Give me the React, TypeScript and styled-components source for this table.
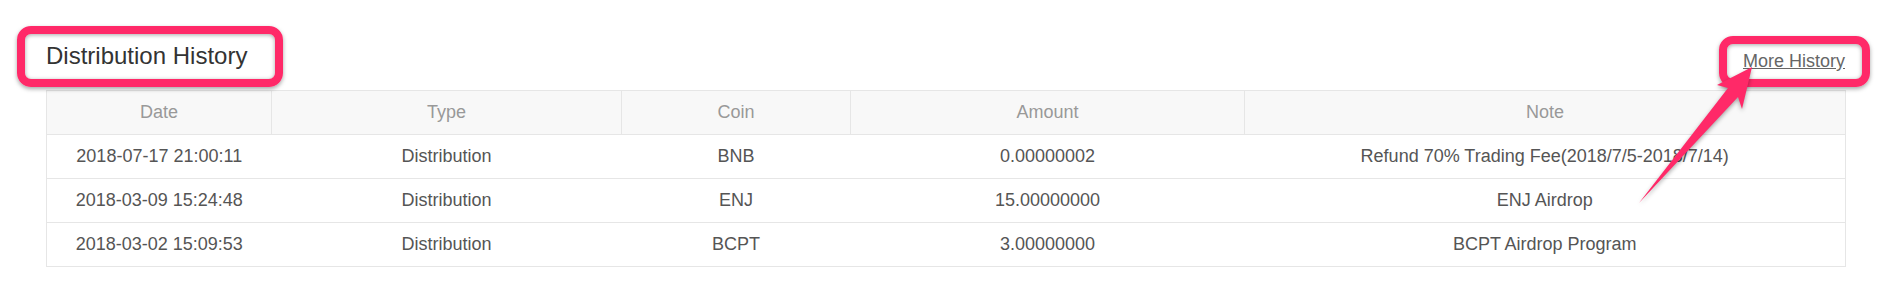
import React from 'react'
import styled, { createGlobalStyle } from 'styled-components'

const Global = createGlobalStyle`
  html, body {
    margin: 0;
    padding: 0;
    background: #fff;
    font-family: "Liberation Sans", Arial, sans-serif;
  }
`

const Page = styled.div`
  position: relative;
  width: 1890px;
  height: 306px;
  padding: 42px 45px 0 46px;
  box-sizing: border-box;
  overflow: hidden;
`

const Header = styled.div`
  display: flex;
  justify-content: space-between;
  align-items: flex-start;
  height: 48px;
`

const Title = styled.h2`
  margin: 0;
  font-size: 24px;
  line-height: 27px;
  font-weight: normal;
  color: #333;
`

const MoreLink = styled.a`
  margin-top: 9px;
  font-size: 18px;
  line-height: 20px;
  color: #666;
  text-decoration: underline;
  cursor: pointer;
`

const Table = styled.table`
  width: 1799px;
  border-collapse: collapse;
  table-layout: fixed;
  border: 1px solid #e6e6e6;
  font-size: 18px;
`

const HeadCell = styled.th`
  height: 43px;
  padding: 0;
  background: #f8f8f8;
  color: #999;
  font-weight: normal;
  text-align: center;
  border: 1px solid #e6e6e6;
`

const Cell = styled.td`
  height: 43px;
  padding: 0;
  color: #555;
  text-align: center;
  border-top: 1px solid #e6e6e6;
  border-bottom: 1px solid #e6e6e6;
`

/* annotation overlay: callout boxes + arrow drawn over the page */
const Callout = styled.div<{ $x: number; $y: number; $w: number; $h: number }>`
  position: absolute;
  left: ${p => p.$x}px;
  top: ${p => p.$y}px;
  width: ${p => p.$w}px;
  height: ${p => p.$h}px;
  box-sizing: border-box;
  border: 8px solid #ff2968;
  border-radius: 14px;
  box-shadow: 0 2px 4px rgba(0, 0, 0, 0.35), inset 0 1px 4px rgba(0, 0, 0, 0.35);
  pointer-events: none;
`

const ArrowSvg = styled.svg`
  position: absolute;
  left: 1630px;
  top: 60px;
  overflow: visible;
  filter: drop-shadow(0 2px 2px rgba(0, 0, 0, 0.35));
  pointer-events: none;
`

const columns = [
  { label: 'Date', width: 225 },
  { label: 'Type', width: 350 },
  { label: 'Coin', width: 229 },
  { label: 'Amount', width: 394 },
  { label: 'Note', width: 601 },
]

const rows = [
  ['2018-07-17 21:00:11', 'Distribution', 'BNB', '0.00000002', 'Refund 70% Trading Fee(2018/7/5-2018/7/14)'],
  ['2018-03-09 15:24:48', 'Distribution', 'ENJ', '15.00000000', 'ENJ Airdrop'],
  ['2018-03-02 15:09:53', 'Distribution', 'BCPT', '3.00000000', 'BCPT Airdrop Program'],
]

export default function App() {
  return (
    <>
      <Global />
      <Page>
        <Header>
          <Title>Distribution History</Title>
          <MoreLink>More History</MoreLink>
        </Header>

        <Table>
          <colgroup>
            {columns.map(c => (
              <col key={c.label} style={{ width: c.width }} />
            ))}
          </colgroup>
          <thead>
            <tr>
              {columns.map(c => (
                <HeadCell key={c.label}>{c.label}</HeadCell>
              ))}
            </tr>
          </thead>
          <tbody>
            {rows.map(r => (
              <tr key={r[0]}>
                {r.map((v, i) => (
                  <Cell key={i}>{v}</Cell>
                ))}
              </tr>
            ))}
          </tbody>
        </Table>

        <Callout $x={17} $y={26} $w={266} $h={61} />
        <Callout $x={1719} $y={36} $w={151} $h={51} />
        <ArrowSvg width="130" height="150" viewBox="0 0 130 150">
          <polygon
            points="122,7 87,25 98,28 9,143 108,37 112,49"
            fill="#ff2968"
          />
        </ArrowSvg>
      </Page>
    </>
  )
}
